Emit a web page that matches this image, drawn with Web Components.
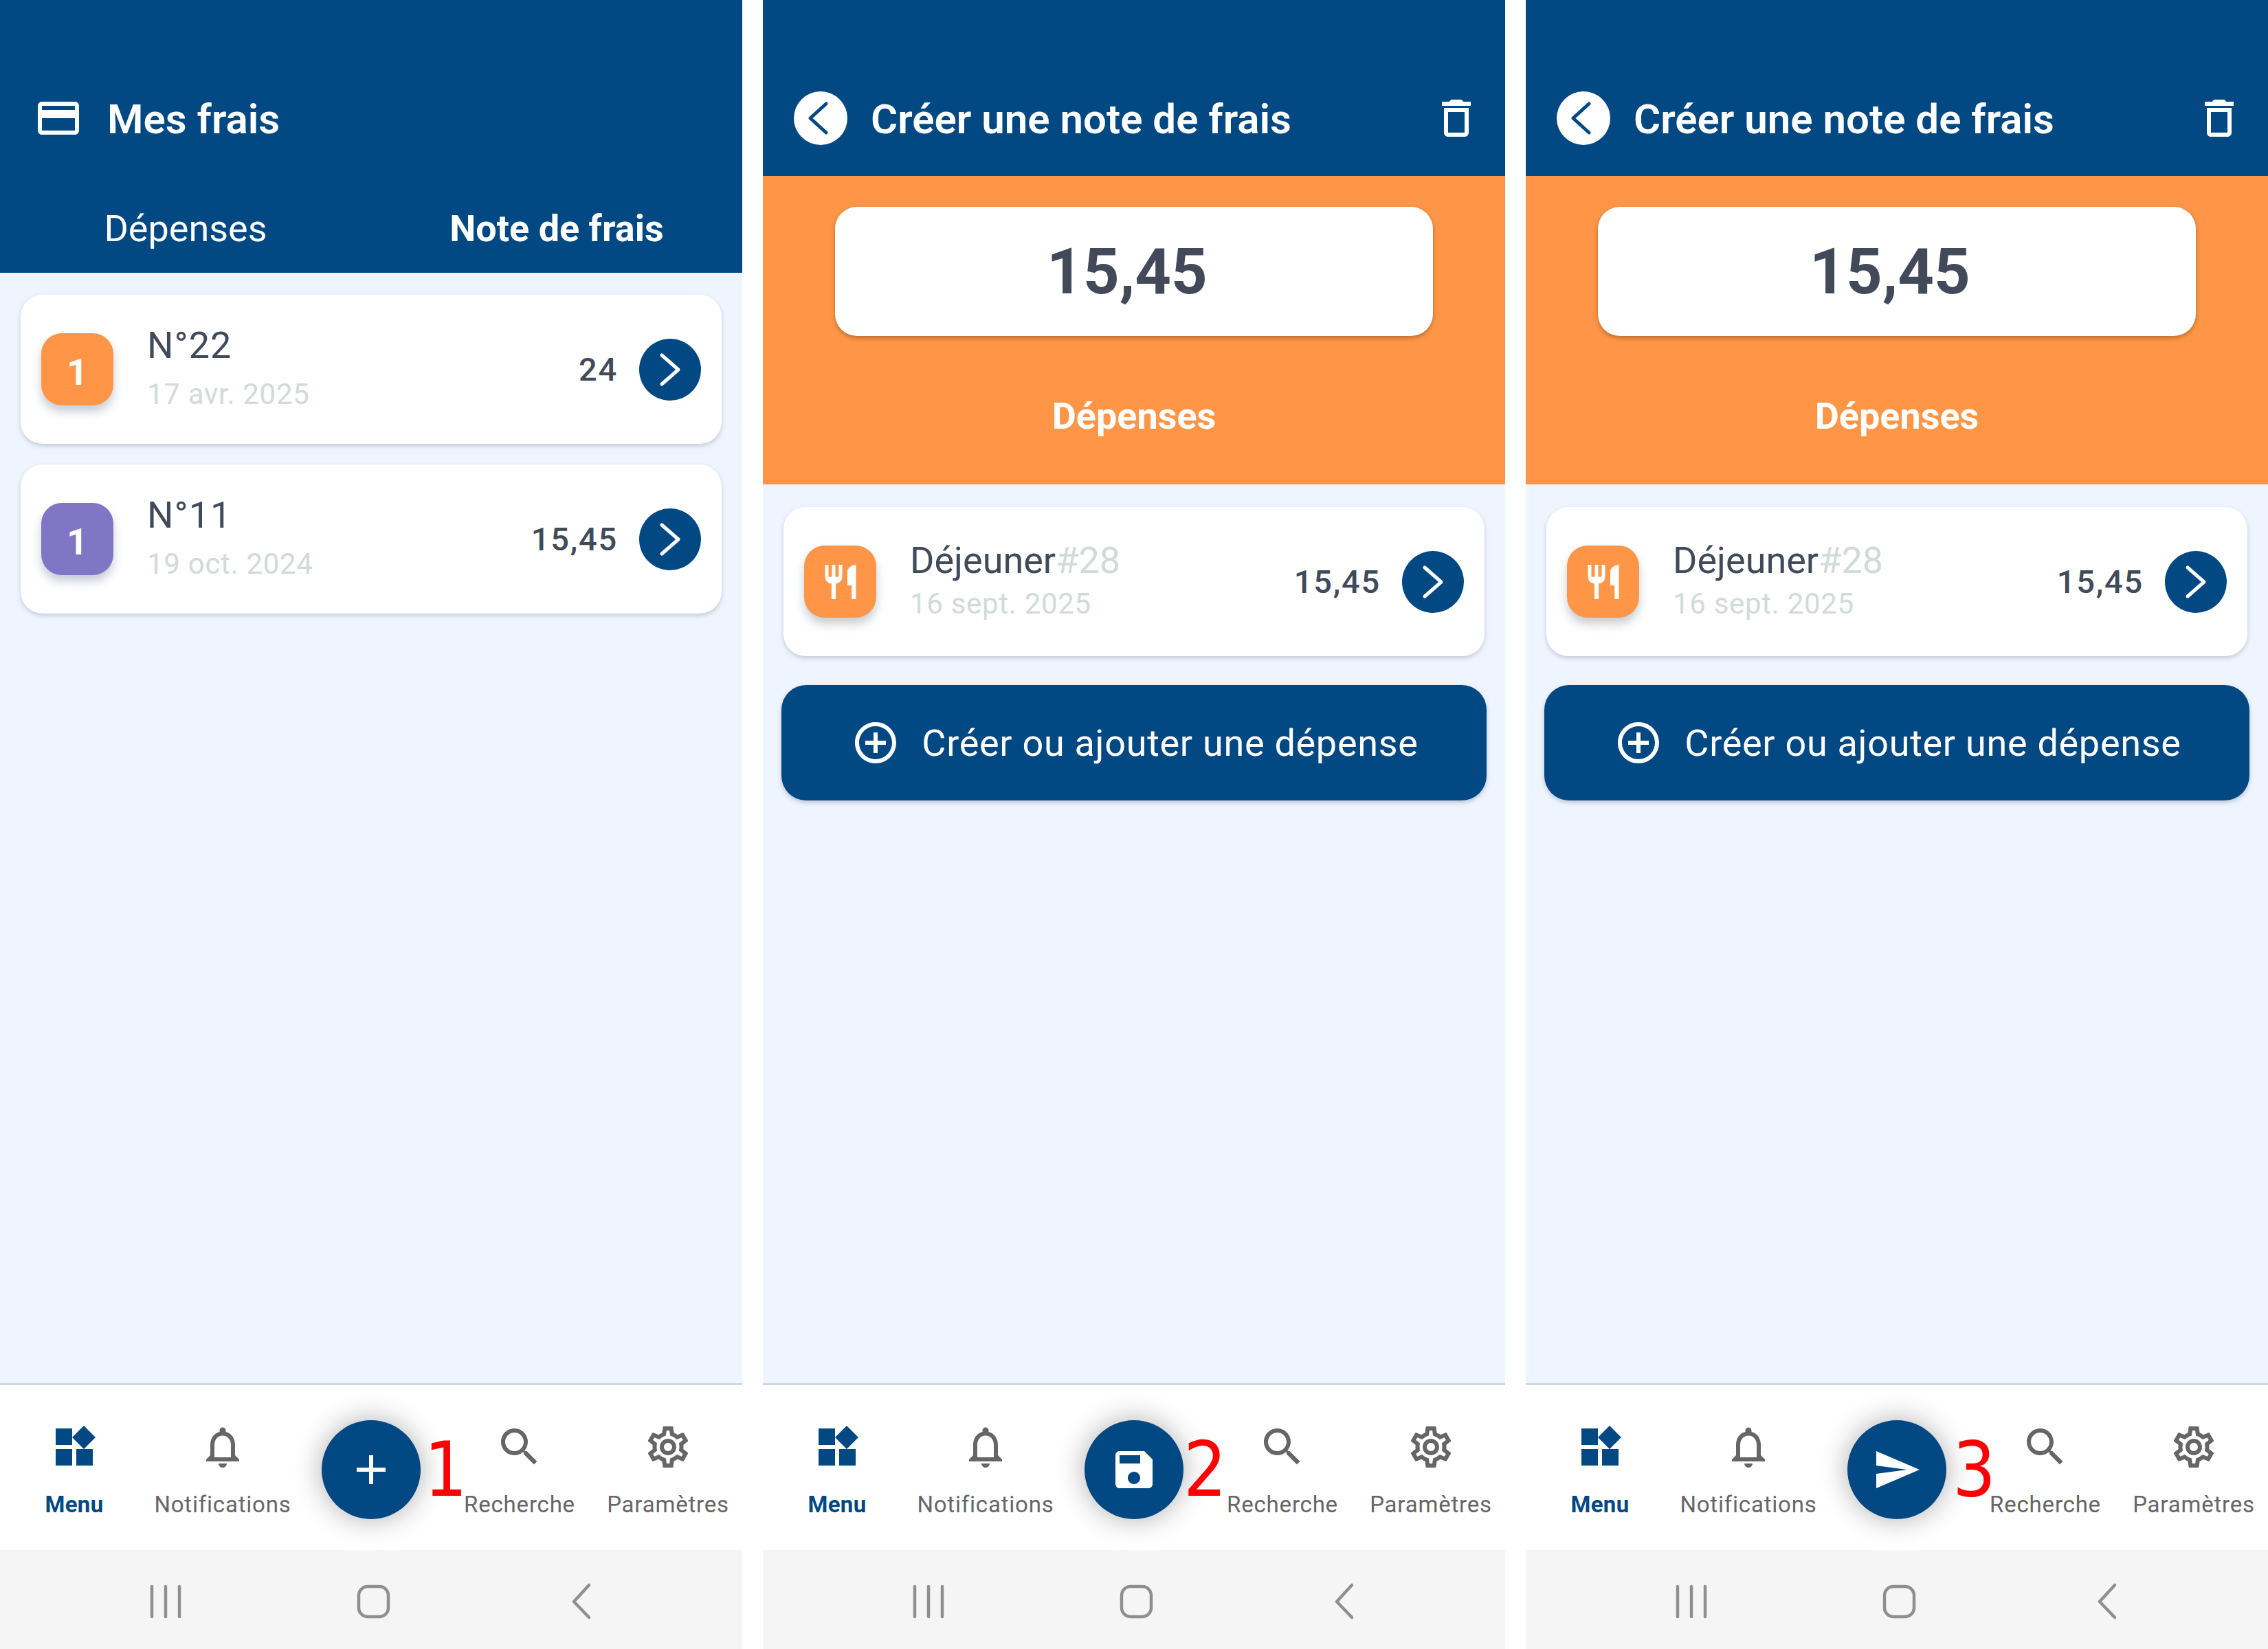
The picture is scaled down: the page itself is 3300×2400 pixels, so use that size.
<!doctype html>
<html lang="fr">
<head>
<meta charset="utf-8">
<title>Mes frais</title>
<style>
  html, body { margin: 0; background: #fff; font-family: Roboto, "Liberation Sans", sans-serif; }
  .phones { display: flex; gap: 30px; width: 3300px; height: 2400px; overflow: hidden; }
</style>
</head>
<body>
<div class="phones">
  <phone-screen>
    <app-header slot="header" tall icon="card" title="Mes frais"></app-header>
    <note-card badge="1" color="#ff9647" title="N°22" date="17 avr. 2025" amount="24"></note-card>
    <note-card badge="1" color="#8176c6" title="N°11" date="19 oct. 2024" amount="15,45"></note-card>
    <bottom-nav slot="nav" action="add" step="1" step-x="157"></bottom-nav>
  </phone-screen>
  <phone-screen>
    <app-header slot="header" back title="Créer une note de frais"></app-header>
    <amount-panel slot="header" value="15,45" label="Dépenses"></amount-panel>
    <note-card icon="restaurant" color="#ff9647" title="Déjeuner" ref="#28" date="16 sept. 2025" amount="15,45" tight></note-card>
    <add-button>Créer ou ajouter une dépense</add-button>
    <bottom-nav slot="nav" action="save" step="2" step-x="152"></bottom-nav>
  </phone-screen>
  <phone-screen>
    <app-header slot="header" back title="Créer une note de frais"></app-header>
    <amount-panel slot="header" value="15,45" label="Dépenses"></amount-panel>
    <note-card icon="restaurant" color="#ff9647" title="Déjeuner" ref="#28" date="16 sept. 2025" amount="15,45" tight></note-card>
    <add-button>Créer ou ajouter une dépense</add-button>
    <bottom-nav slot="nav" action="send" step="3" step-x="161"></bottom-nav>
  </phone-screen>
</div>
<script>
const ICONS = {
  card: 'M20 4H4c-1.11 0-1.99.89-1.99 2L2 18c0 1.11.89 2 2 2h16c1.11 0 2-.89 2-2V6c0-1.11-.89-2-2-2zm0 14H4v-6h16v6zm0-10H4V6h16v2z',
  trash: 'M6 19c0 1.1.9 2 2 2h8c1.1 0 2-.9 2-2V7H6v12zM8 9h8v10H8V9zm7.5-5l-1-1h-5l-1 1H5v2h14V4z',
  restaurant: 'M11 9H9V2H7v7H5V2H3v7c0 2.12 1.66 3.84 3.75 3.97V22h2.5v-9.03C11.34 12.84 13 11.12 13 9V2h-2v7zm5-3v8h2.5v8H21V2c-2.76 0-5 2.24-5 4z',
  widgets: 'M13 13v8h8v-8h-8zM3 21h8v-8H3v8zM3 3v8h8V3H3zm13.66-1.31L11 7.34 16.66 13l5.66-5.66-5.66-5.65z',
  bell: 'M12 22c1.1 0 2-.9 2-2h-4c0 1.1.89 2 2 2zm6-6v-5c0-3.07-1.64-5.64-4.5-6.32V4c0-.83-.67-1.5-1.5-1.5s-1.5.67-1.5 1.5v.68C7.63 5.36 6 7.92 6 11v5l-2 2v1h16v-1l-2-2zm-2 1H8v-6c0-2.48 1.51-4.5 4-4.5s4 2.02 4 4.5v6z',
  search: 'M15.5 14h-.79l-.28-.27C15.41 12.59 16 11.11 16 9.5 16 5.91 13.09 3 9.5 3S3 5.91 3 9.5 5.91 16 9.5 16c1.61 0 3.09-.59 4.23-1.57l.27.28v.79l5 4.99L20.49 19l-4.99-5zm-6 0C7.01 14 5 11.99 5 9.5S7.01 5 9.5 5 14 7.01 14 9.5 11.99 14 9.5 14z',
  gear: 'M19.43 12.98c.04-.32.07-.64.07-.98 0-.34-.03-.66-.07-.98l2.11-1.65c.19-.15.24-.42.12-.64l-2-3.46c-.09-.16-.26-.25-.44-.25-.06 0-.12.01-.17.03l-2.49 1c-.52-.4-1.08-.73-1.69-.98l-.38-2.65C14.46 2.18 14.25 2 14 2h-4c-.25 0-.46.18-.49.42l-.38 2.65c-.61.25-1.17.59-1.69.98l-2.49-1c-.06-.02-.12-.03-.18-.03-.17 0-.34.09-.43.25l-2 3.46c-.13.22-.07.49.12.64l2.11 1.65c-.04.32-.07.65-.07.98 0 .33.03.66.07.98l-2.11 1.65c-.19.15-.24.42-.12.64l2 3.46c.09.16.26.25.44.25.06 0 .12-.01.17-.03l2.49-1c.52.4 1.08.73 1.69.98l.38 2.65c.03.24.24.42.49.42h4c.25 0 .46-.18.49-.42l.38-2.65c.61-.25 1.17-.59 1.69-.98l2.49 1c.06.02.12.03.18.03.17 0 .34-.09.43-.25l2-3.46c.12-.22.07-.49-.12-.64l-2.11-1.65zm-1.98-1.71c.04.31.05.52.05.73 0 .21-.02.43-.05.73l-.14 1.13.89.7 1.08.84-.7 1.21-1.27-.51-1.04-.42-.9.68c-.43.32-.84.56-1.25.73l-1.06.43-.16 1.13-.2 1.35h-1.4l-.19-1.35-.16-1.13-1.06-.43c-.43-.18-.83-.41-1.23-.71l-.91-.7-1.06.43-1.27.51-.7-1.21 1.08-.84.89-.7-.14-1.13c-.03-.31-.05-.54-.05-.74s.02-.43.05-.73l.14-1.13-.89-.7-1.08-.84.7-1.21 1.27.51 1.04.42.9-.68c.43-.32.84-.56 1.25-.73l1.06-.43.16-1.13.2-1.35h1.39l.19 1.35.16 1.13 1.06.43c.43.18.83.41 1.23.71l.91.7 1.06-.43 1.27-.51.7 1.21-1.07.85-.89.7.14 1.13zM12 8c-2.21 0-4 1.79-4 4s1.79 4 4 4 4-1.79 4-4-1.79-4-4-4zm0 6c-1.1 0-2-.9-2-2s.9-2 2-2 2 .9 2 2-.9 2-2 2z',
  add: 'M19 13h-6v6h-2v-6H5v-2h6V5h2v6h6v2z',
  addCircle: 'M13 7h-2v4H7v2h4v4h2v-4h4v-2h-4V7zm-1-5C6.48 2 2 6.48 2 12s4.48 10 10 10 10-4.48 10-10S17.52 2 12 2zm0 18c-4.41 0-8-3.59-8-8s3.59-8 8-8 8 3.59 8 8-3.59 8-8 8z',
  save: 'M17 3H5c-1.11 0-2 .9-2 2v14c0 1.1.89 2 2 2h14c1.1 0 2-.9 2-2V7l-4-4zm-5 16c-1.66 0-3-1.34-3-3s1.34-3 3-3 3 1.34 3 3-1.34 3-3 3zm3-10H5V5h10v4z',
  send: 'M2.01 21L23 12 2.01 3 2 10l15 2-15 2z',
};

class UiIcon extends HTMLElement {
  connectedCallback() {
    const size = this.getAttribute('size') || 72;
    this.attachShadow({ mode: 'open' }).innerHTML = `
      <style>
        :host { display: block; width: ${size}px; height: ${size}px; flex: none; }
        svg { display: block; width: 100%; height: 100%; fill: currentColor; }
      </style>
      <svg viewBox="0 0 24 24"><path d="${ICONS[this.getAttribute('name')]}"/></svg>`;
  }
}

class PhoneScreen extends HTMLElement {
  connectedCallback() {
    this.attachShadow({ mode: 'open' }).innerHTML = `
      <style>
        :host { display: flex; flex-direction: column; width: 1080px; height: 2400px; flex: none;
          background: #eff5fe; }
        .list { flex: 1; display: flex; flex-direction: column; padding: 32px 0 0; min-height: 0; }
      </style>
      <slot name="header"></slot>
      <div class="list"><slot></slot></div>
      <slot name="nav"></slot>`;
  }
}

class AppHeader extends HTMLElement {
  connectedCallback() {
    const tall = this.hasAttribute('tall');
    const title = this.getAttribute('title');
    const lead = tall
      ? `<ui-icon name="${this.getAttribute('icon')}"></ui-icon>`
      : `<span class="back"><svg viewBox="0 0 78 78"><path d="M47 18 L24 39 L47 60" fill="none" stroke="#024883" stroke-width="5" stroke-linecap="round" stroke-linejoin="round"/></svg></span>`;
    this.attachShadow({ mode: 'open' }).innerHTML = `
      <style>
        :host { display: block; background: #024883; color: #fff; }
        .bar { height: 256px; box-sizing: border-box; padding: 136px 35px 0 49px; display: flex; }
        .row { display: flex; align-items: center; height: 72px; width: 100%; }
        :host([back]) .bar { padding-left: 45px; }
        .title { font-size: 60px; font-weight: 600; margin-left: 35px; padding-top: 2px; flex: 1; white-space: nowrap; }
        :host([back]) .title { margin-left: 34px; }
        .back { width: 78px; height: 78px; border-radius: 50%; background: #fff; flex: none; }
        .back svg { display: block; width: 78px; height: 78px; }
        .tabs { display: grid; grid-template-columns: 1fr 1fr; box-sizing: border-box; height: 141px;
          padding-top: 12px; font-size: 54px; text-align: center; }
        .tabs span { line-height: 129px; }
        .tabs .on { font-weight: 700; }
      </style>
      <div class="bar"><div class="row">${lead}<span class="title">${title}</span>${tall ? '' : '<ui-icon name="trash"></ui-icon>'}</div></div>
      ${tall ? '<div class="tabs"><span>Dépenses</span><span class="on">Note de frais</span></div>' : ''}`;
  }
}

class AmountPanel extends HTMLElement {
  connectedCallback() {
    this.attachShadow({ mode: 'open' }).innerHTML = `
      <style>
        :host { display: block; height: 449px; box-sizing: border-box; padding: 45px 105px 0;
          background: #ff9647; color: #fff; text-align: center; }
        .box { height: 188px; box-sizing: border-box; padding-right: 20px; border-radius: 32px;
          background: #fff; box-shadow: 0 3px 6px rgba(90,50,10,.4);
          color: #424a59; font-size: 92px; font-weight: 700; line-height: 190px; }
        .label { font-size: 54px; font-weight: 700; margin-top: 85px; line-height: 64px; }
      </style>
      <div class="box">${this.getAttribute('value')}</div>
      <div class="label">${this.getAttribute('label')}</div>`;
  }
}

class NoteCard extends HTMLElement {
  connectedCallback() {
    const color = this.getAttribute('color');
    const icon = this.getAttribute('icon');
    const ref = this.getAttribute('ref');
    this.attachShadow({ mode: 'open' }).innerHTML = `
      <style>
        :host { display: flex; align-items: center; height: 217px; box-sizing: border-box;
          margin: 0 30px 30px; padding: 0 30px 0 30px; background: #fff; border-radius: 32px;
          box-shadow: 0 3px 6px rgba(60,80,110,.25); color: #414a59; }
        :host([tight]) { margin-top: 1px; }
        .badge { width: 105px; height: 105px; flex: none; border-radius: 30px; color: #fff;
          display: flex; align-items: center; justify-content: center;
          font-size: 54px; font-weight: 700; box-shadow: 0 9px 14px rgba(70,90,120,.3); }
        .digit { padding-top: 8px; }
        .text { flex: 1; margin-left: 49px; white-space: nowrap; letter-spacing: 1px; }
        .title { font-size: 54px; line-height: 64px; margin-top: -6px; }
        :host([tight]) .title { letter-spacing: 0; }
        .ref { color: #d2dada; }
        .date { font-size: 42px; line-height: 50px; margin-top: 14px; color: #d2dada; letter-spacing: .7px; }
        :host([tight]) .date { margin-top: 6px; }
        .amount { font-size: 47px; font-weight: 500; letter-spacing: 1.8px; margin-right: 31px; }
        .go { width: 90px; height: 90px; border-radius: 50%; background: #024883; flex: none; }
        .go svg { display: block; width: 90px; height: 90px; }
      </style>
      <span class="badge" style="background:${color}">${icon ? `<ui-icon name="${icon}" size="60"></ui-icon>` : `<span class="digit">${this.getAttribute('badge')}</span>`}</span>
      <div class="text">
        <div class="title">${this.getAttribute('title')}${ref ? `<span class="ref">${ref}</span>` : ''}</div>
        <div class="date">${this.getAttribute('date')}</div>
      </div>
      <span class="amount">${this.getAttribute('amount')}</span>
      <span class="go"><svg viewBox="0 0 90 90"><path d="M33 24 L57 45 L33 66" fill="none" stroke="#fff" stroke-width="5" stroke-linecap="round" stroke-linejoin="round"/></svg></span>`;
  }
}

class AddButton extends HTMLElement {
  connectedCallback() {
    this.attachShadow({ mode: 'open' }).innerHTML = `
      <style>
        :host { display: flex; align-items: center; justify-content: center; height: 168px;
          margin: 12px 27px 0; padding-left: 2px; border-radius: 36px; background: #024883; color: #fff;
          font-size: 54px; letter-spacing: .7px; box-shadow: 0 3px 6px rgba(60,80,110,.3); }
        ui-icon { margin-right: 31px; }
      </style>
      <ui-icon name="addCircle"></ui-icon>
      <slot></slot>`;
  }
}

class NavItem extends HTMLElement {
  connectedCallback() {
    this.attachShadow({ mode: 'open' }).innerHTML = `
      <style>
        :host { display: flex; flex-direction: column; align-items: center; padding-top: 54px;
          color: #666; font-size: 33px; letter-spacing: .8px; white-space: nowrap; }
        :host([active]) { color: #024883; font-weight: 700; letter-spacing: .3px; }
        span { line-height: 40px; margin-top: 28px; }
      </style>
      <ui-icon name="${this.getAttribute('icon')}"></ui-icon>
      <span><slot></slot></span>`;
  }
}

class FabButton extends HTMLElement {
  connectedCallback() {
    this.attachShadow({ mode: 'open' }).innerHTML = `
      <style>
        :host { display: flex; align-items: center; justify-content: center; position: relative;
          width: 144px; height: 144px; margin: 51px auto 0; border-radius: 50%;
          background: #024883; color: #fff; box-shadow: 0 0 40px rgba(0,0,0,.32); }
        .step { position: absolute; top: 17px; left: ${this.getAttribute('step-x') - 8}px;
          color: #f00; font-family: "DejaVu Sans Condensed", "DejaVu Sans", sans-serif;
          font-stretch: condensed; font-size: 110px; line-height: 110px; }
      </style>
      <ui-icon name="${this.getAttribute('icon')}"></ui-icon>
      <span class="step">${this.getAttribute('step')}</span>`;
  }
}

class BottomNav extends HTMLElement {
  connectedCallback() {
    this.attachShadow({ mode: 'open' }).innerHTML = `
      <style>
        :host { display: block; background: #f5f5f5; }
        .items { display: grid; grid-template-columns: repeat(5, 216px); height: 240px;
          border-top: 3px solid #cfd8dc; background: #fff; }
        .sys { height: 144px; display: flex; }
        .sys svg { display: block; width: 1080px; height: 144px; }
      </style>
      <div class="items">
        <nav-item icon="widgets" active>Menu</nav-item>
        <nav-item icon="bell">Notifications</nav-item>
        <fab-button icon="${this.getAttribute('action')}" step="${this.getAttribute('step')}" step-x="${this.getAttribute('step-x')}"></fab-button>
        <nav-item icon="search">Recherche</nav-item>
        <nav-item icon="gear">Paramètres</nav-item>
      </div>
      <div class="sys">
        <svg viewBox="0 0 1080 144" fill="none" stroke="#8f8f8f" stroke-width="4.5" stroke-linecap="round" stroke-linejoin="round">
          <path d="M221 53v44M241 53v44M261 53v44"/>
          <rect x="522" y="53" width="43" height="44" rx="13"/>
          <path d="M857 51 L835 75 L857 98"/>
        </svg>
      </div>`;
  }
}

customElements.define('ui-icon', UiIcon);
customElements.define('phone-screen', PhoneScreen);
customElements.define('app-header', AppHeader);
customElements.define('amount-panel', AmountPanel);
customElements.define('note-card', NoteCard);
customElements.define('add-button', AddButton);
customElements.define('nav-item', NavItem);
customElements.define('fab-button', FabButton);
customElements.define('bottom-nav', BottomNav);
</script>
</body>
</html>
